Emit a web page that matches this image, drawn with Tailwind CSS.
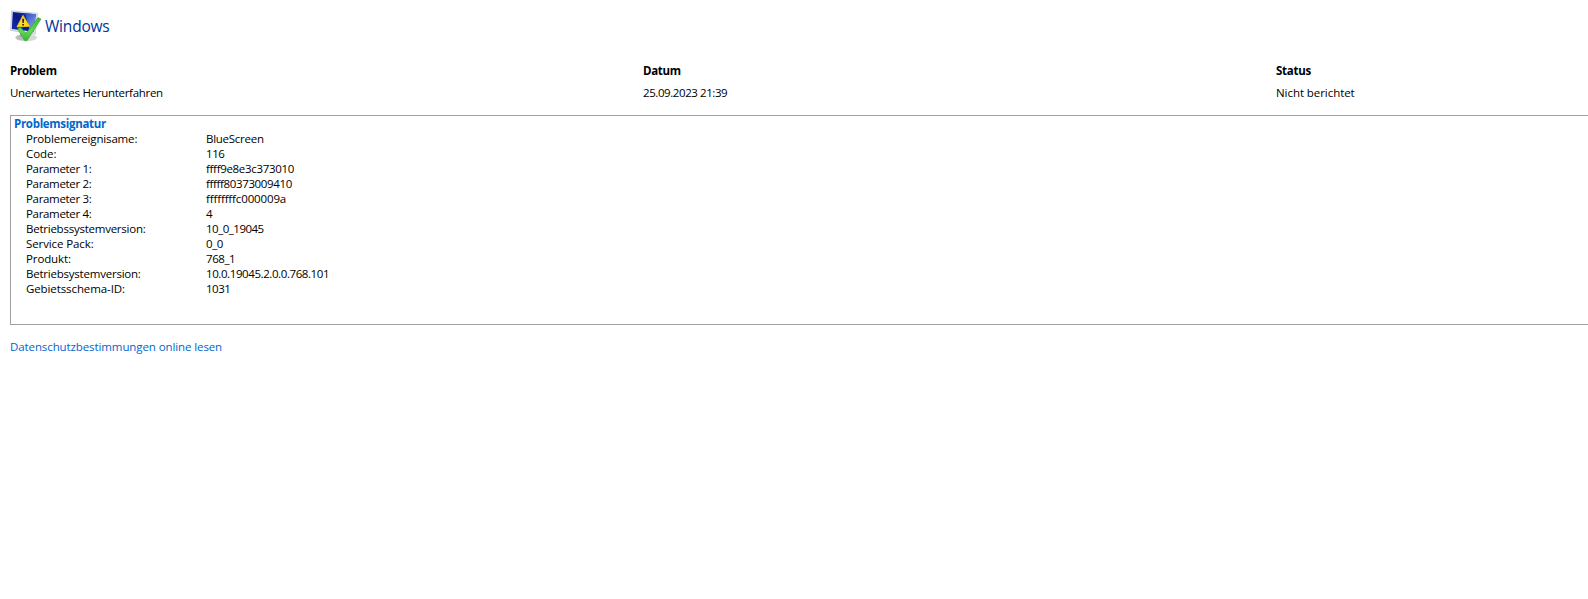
<!DOCTYPE html>
<html lang="de">
<head>
  <meta charset="UTF-8">
  <meta name="viewport" content="width=device-width, initial-scale=1.0">
  <title>Windows</title>
  <script src="https://cdn.jsdelivr.net/npm/@tailwindcss/browser@4"></script>
</head>
<body class="bg-white text-black font-['Open_Sans','Noto_Sans',sans-serif] text-[11.5px] leading-[15px] overflow-hidden">
  <main class="pl-[10px] pt-[10px]">
    <!-- Title -->
    <header class="flex h-8 items-center gap-[3px]">
      <svg class="size-8 shrink-0" viewBox="0 0 32 32" aria-hidden="true">
        <defs>
          <linearGradient id="screen" x1="0" y1="1" x2="1" y2="0">
            <stop offset="0" stop-color="#1230b8" />
            <stop offset="0.5" stop-color="#0a1788" />
            <stop offset="1" stop-color="#1b3bc4" />
          </linearGradient>
          <linearGradient id="shine" x1="0" y1="0" x2="0.6" y2="1">
            <stop offset="0" stop-color="#2445c4" />
            <stop offset="1" stop-color="#8ea8ec" />
          </linearGradient>
          <linearGradient id="check" x1="0" y1="0" x2="0" y2="1">
            <stop offset="0" stop-color="#3fb83a" />
            <stop offset="0.6" stop-color="#62da55" />
            <stop offset="1" stop-color="#35b52f" />
          </linearGradient>
        </defs>
        <ellipse cx="16" cy="27.6" rx="11" ry="3.6" fill="#d8d8d8" />
        <ellipse cx="12" cy="27.6" rx="6" ry="2.8" fill="#bcbcbc" />
        <path d="M10 20h9v7h-9z" fill="#aaa" />
        <path d="M1.6.8 27.4 3.4 25.2 24.2.6 20.4z" fill="#e4e4e4" stroke="#bdbdbd" stroke-width=".7" />
        <path d="M2.8 2.1 25.8 4.3 23.8 21.8 1.8 18.9z" fill="url(#screen)" />
        <path d="M15 3.3 25.8 4.3 23.8 21.8 20 21.3z" fill="url(#shine)" />
        <path d="M13 5.4 19.4 16.2 7 16.9z" fill="#ffd91c" stroke="#f0c418" stroke-width="1" stroke-linejoin="round" />
        <path d="M12.2 8.8h1.9l-.3 4.2h-1.3zM12.3 14h1.7v1.5h-1.7z" fill="#222" />
        <path d="M7.6 18.8 10.6 17.2 15.8 23.6 28 7.6 31 9 17 30.6 14.6 30.6z" fill="url(#check)" stroke="#2f9c2b" stroke-width=".6" stroke-linejoin="round" />
      </svg>
      <h1 class="text-[15.5px] leading-5 tracking-[-0.2px] text-[#003399]">Windows</h1>
    </header>

    <!-- Report summary -->
    <section class="mt-[21px] grid grid-cols-[633px_633px_1fr] gap-y-[7px]">
      <h2 class="font-bold tracking-[-0.25px]">Problem</h2>
      <h2 class="font-bold tracking-[-0.3px]">Datum</h2>
      <h2 class="font-bold tracking-[-0.25px]">Status</h2>
      <p class="tracking-[-0.29px]">Unerwartetes Herunterfahren</p>
      <p class="tracking-[-0.42px]">25.09.2023 21:39</p>
      <p class="tracking-[-0.06px]">Nicht berichtet</p>
    </section>

    <!-- Problem signature -->
    <section class="mt-[15px] h-[210px] border border-r-0 border-[#a0a0a0] pl-[3px]">
      <h2 class="font-bold tracking-[-0.3px] text-[#0066cc]">Problemsignatur</h2>
      <dl class="grid grid-cols-[180px_1fr] pl-3">
        <dt class="tracking-[-0.16px]">Problemereignisame:</dt>
        <dd class="tracking-[-0.26px]">BlueScreen</dd>
        <dt class="tracking-[-0.05px]">Code:</dt>
        <dd class="tracking-[-0.4px]">116</dd>
        <dt class="tracking-[-0.32px]">Parameter 1:</dt>
        <dd class="tracking-[-0.32px]">ffff9e8e3c373010</dd>
        <dt class="tracking-[-0.32px]">Parameter 2:</dt>
        <dd class="tracking-[-0.36px]">fffff80373009410</dd>
        <dt class="tracking-[-0.32px]">Parameter 3:</dt>
        <dd class="tracking-[-0.14px]">ffffffffc000009a</dd>
        <dt class="tracking-[-0.32px]">Parameter 4:</dt>
        <dd>4</dd>
        <dt class="tracking-[-0.24px]">Betriebssystemversion:</dt>
        <dd class="tracking-[-0.5px]">10_0_19045</dd>
        <dt class="tracking-[-0.1px]">Service Pack:</dt>
        <dd class="tracking-[-0.4px]">0_0</dd>
        <dt class="tracking-[-0.12px]">Produkt:</dt>
        <dd class="tracking-[-0.45px]">768_1</dd>
        <dt class="tracking-[-0.22px]">Betriebsystemversion:</dt>
        <dd class="tracking-[-0.41px]">10.0.19045.2.0.0.768.101</dd>
        <dt class="tracking-[-0.1px]">Gebietsschema-ID:</dt>
        <dd class="tracking-[-0.5px]">1031</dd>
      </dl>
    </section>

    <a href="#" class="mt-[14px] inline-block tracking-[-0.1px] text-[#0066cc]">Datenschutzbestimmungen online lesen</a>
  </main>
</body>
</html>
